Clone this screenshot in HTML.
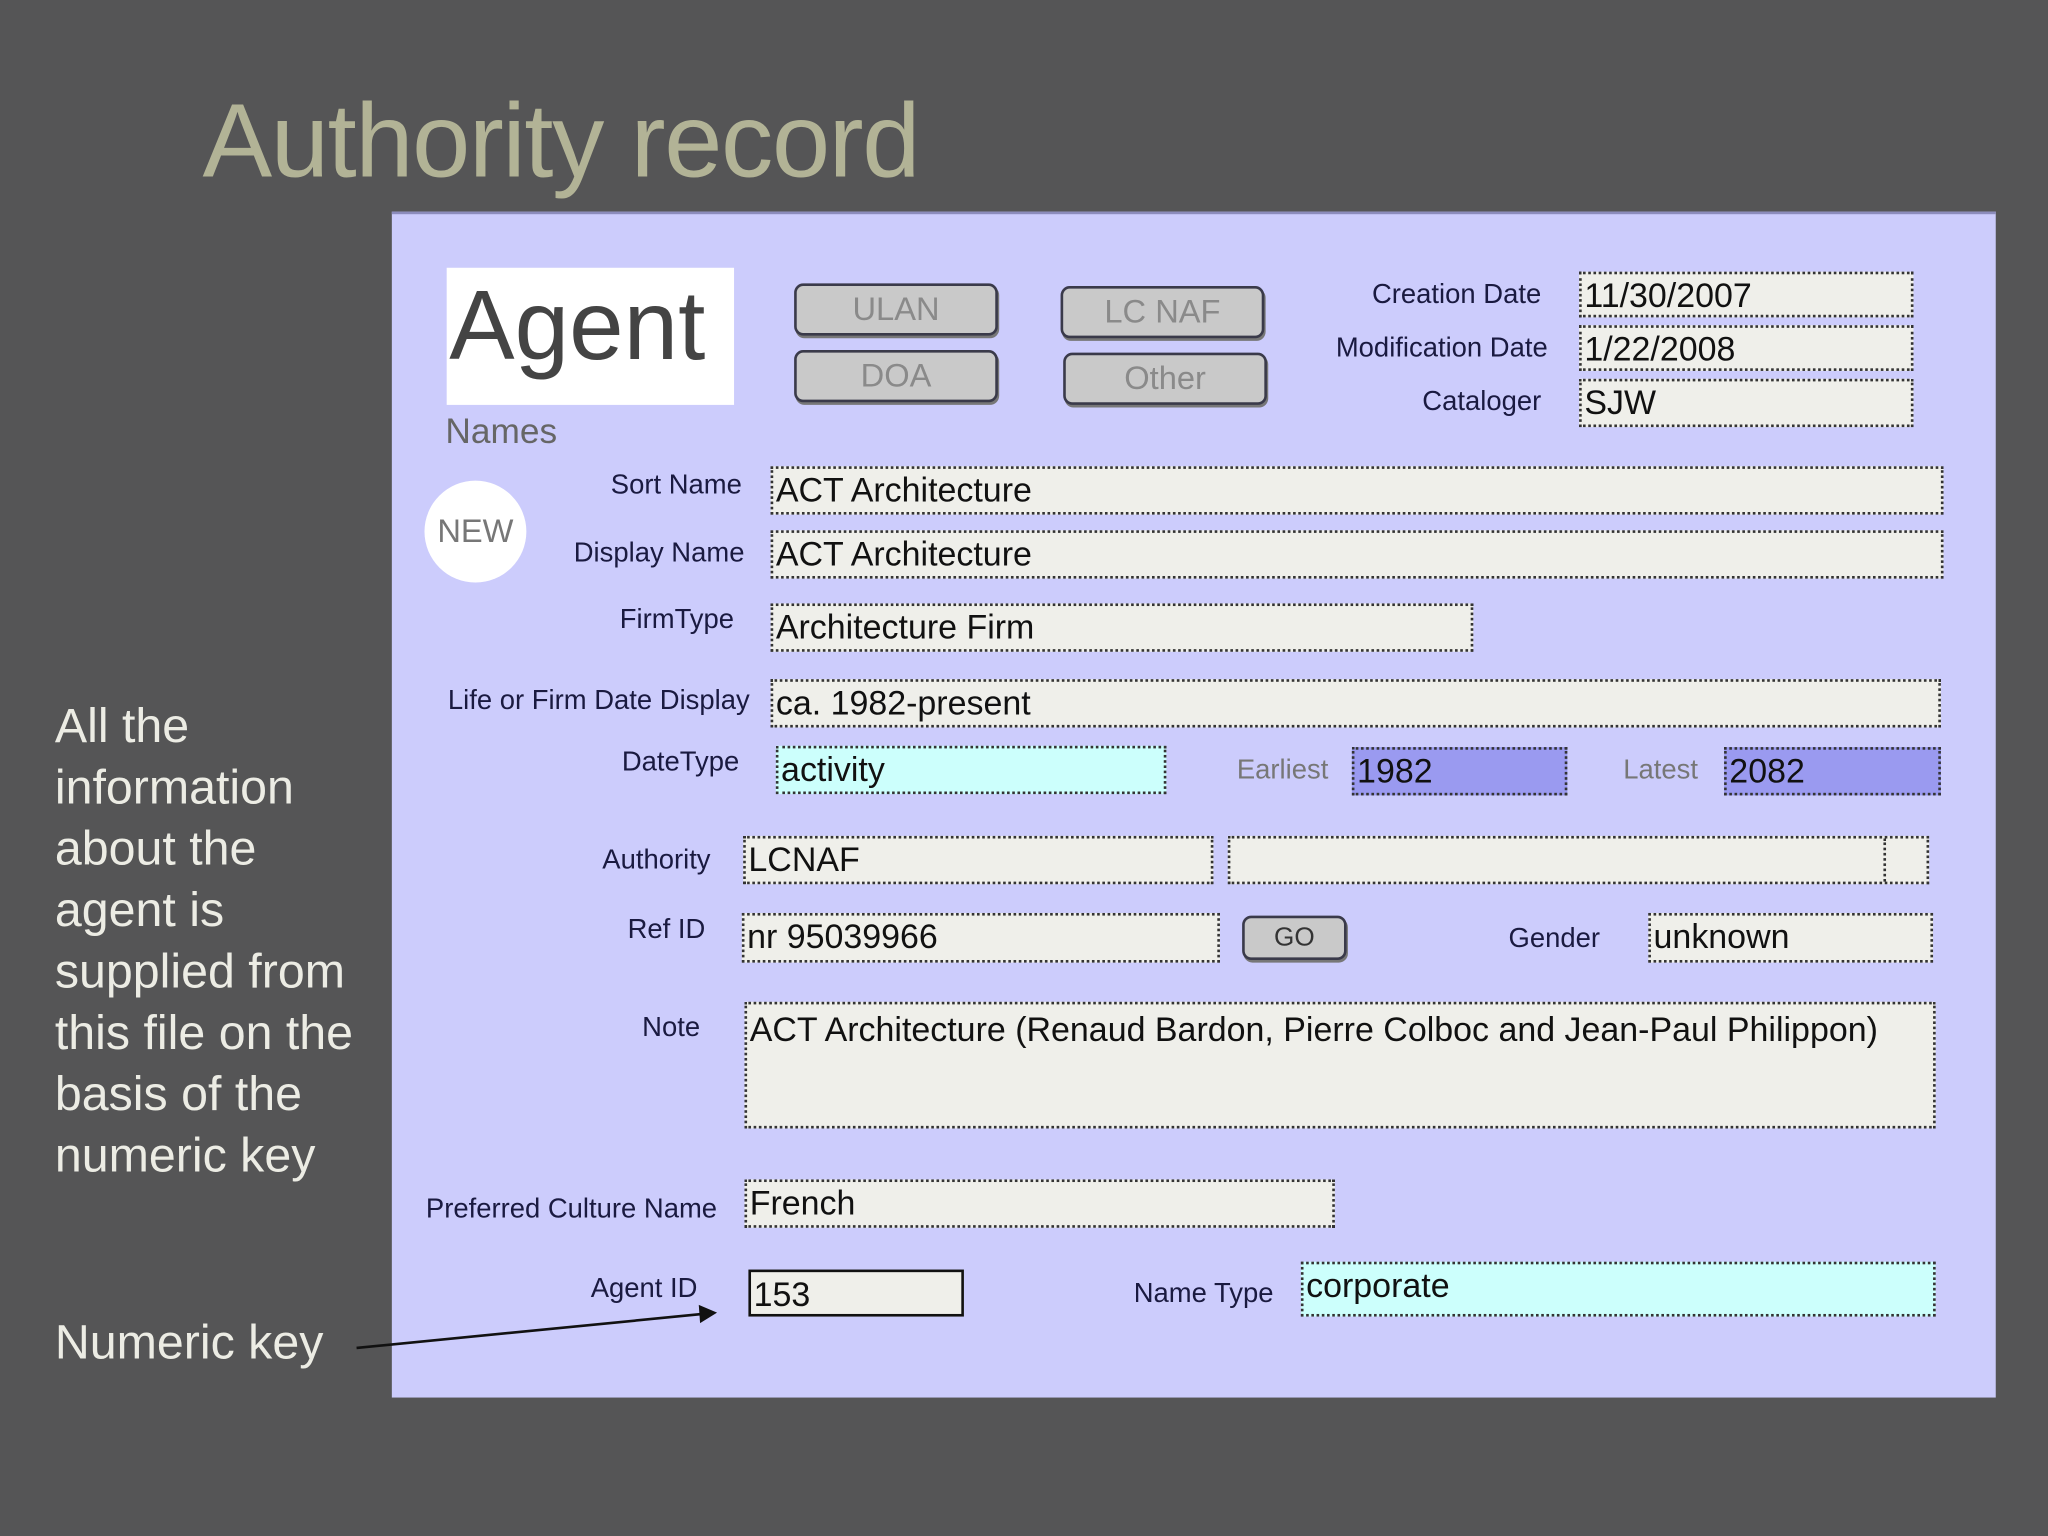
<!DOCTYPE html>
<html><head><meta charset="utf-8"><style>
html,body{margin:0;padding:0;background:#555556;width:2048px;height:1536px;overflow:hidden}
#w{position:absolute;left:0;top:0;width:1568px;height:1176px;transform:scale(1.30612);transform-origin:0 0;font-family:"Liberation Sans",sans-serif}
.a{position:absolute}
.title{left:155px;top:62px;font-size:80px;color:#b2b396;white-space:nowrap;letter-spacing:-1px}
.side{left:42px;top:532px;font-size:37px;line-height:47px;color:#ecece4;white-space:nowrap}
.panel{left:300px;top:162px;width:1228px;height:906px;background:#ccccfc;border-top:2px solid #8c8cbc}
.f{position:absolute;background:#efefea;border:2px dotted #333;box-sizing:border-box;font-family:"Liberation Sans Narrow","Liberation Sans",sans-serif;font-size:26px;color:#111;padding-left:2px;line-height:32px;white-space:nowrap;overflow:hidden}
.l{position:absolute;font-family:"Liberation Sans Narrow","Liberation Sans",sans-serif;font-size:21px;color:#1a1a40;text-align:right;white-space:nowrap;transform:translateX(-100%)}
.b{position:absolute;background:#c9c9c9;border:2px solid #3a3a4a;border-radius:7px;box-sizing:border-box;text-align:center;color:#8a8a8a;font-size:25px;font-family:"Liberation Sans Narrow","Liberation Sans",sans-serif;box-shadow:1px 2px 0 #777}
.cy{background:#ccfffc}.bl{background:#9a9af0}
</style></head><body><div id="w">
<div class="a title">Authority record</div>
<div class="a side">All the<br>information<br>about the<br>agent is<br>supplied from<br>this file on the<br>basis of the<br>numeric key</div>
<div class="a side" style="top:1004px">Numeric key</div>
<div class="a panel"></div>
<div class="a" style="left:342px;top:205px;width:220px;height:105px;background:#fff"></div>
<div class="a" style="left:344px;top:206px;font-size:75px;color:#444">Agent</div>
<div class="a" style="left:341px;top:315px;font-size:27px;color:#666">Names</div>
<div class="a" style="left:325px;top:368px;width:78px;height:78px;border-radius:50%;background:#fff;text-align:center;line-height:78px;font-size:25px;color:#777">NEW</div>
<div class="b" style="left:608px;top:217px;width:156px;height:40px;line-height:36px">ULAN</div>
<div class="b" style="left:608px;top:268px;width:156px;height:40px;line-height:36px">DOA</div>
<div class="b" style="left:812px;top:219px;width:156px;height:40px;line-height:36px">LC NAF</div>
<div class="b" style="left:814px;top:270px;width:156px;height:40px;line-height:36px">Other</div>
<div class="l" style="left:1180px;top:214px">Creation Date</div>
<div class="l" style="left:1185px;top:255px">Modification Date</div>
<div class="l" style="left:1180px;top:296px">Cataloger</div>
<div class="f" style="left:1209px;top:208px;width:256px;height:35px">11/30/2007</div>
<div class="f" style="left:1209px;top:249px;width:256px;height:35px">1/22/2008</div>
<div class="f" style="left:1209px;top:290px;width:256px;height:37px">SJW</div>
<div class="l" style="left:568px;top:360px">Sort Name</div>
<div class="f" style="left:590px;top:357px;width:898px;height:37px">ACT Architecture</div>
<div class="l" style="left:570px;top:412px">Display Name</div>
<div class="f" style="left:590px;top:406px;width:898px;height:37px">ACT Architecture</div>
<div class="l" style="left:562px;top:463px">FirmType</div>
<div class="f" style="left:590px;top:462px;width:538px;height:37px">Architecture Firm</div>
<div class="l" style="left:574px;top:525px">Life or Firm Date Display</div>
<div class="f" style="left:590px;top:520px;width:896px;height:37px">ca. 1982-present</div>
<div class="l" style="left:566px;top:572px">DateType</div>
<div class="f cy" style="left:594px;top:571px;width:299px;height:37px">activity</div>
<div class="l" style="left:1017px;top:578px;color:#777">Earliest</div>
<div class="f bl" style="left:1035px;top:572px;width:165px;height:37px">1982</div>
<div class="l" style="left:1300px;top:578px;color:#777">Latest</div>
<div class="f bl" style="left:1320px;top:572px;width:166px;height:37px">2082</div>
<div class="l" style="left:544px;top:647px">Authority</div>
<div class="f" style="left:569px;top:640px;width:360px;height:37px">LCNAF</div>
<div class="f" style="left:940px;top:640px;width:537px;height:37px"></div>
<div class="a" style="left:1442px;top:642px;width:0;height:33px;border-left:2px dotted #333"></div>
<div class="l" style="left:540px;top:700px">Ref ID</div>
<div class="f" style="left:568px;top:699px;width:366px;height:38px">nr 95039966</div>
<div class="b" style="left:951px;top:701px;width:80px;height:34px;line-height:30px;color:#333;font-size:20px">GO</div>
<div class="l" style="left:1225px;top:707px">Gender</div>
<div class="f" style="left:1262px;top:699px;width:218px;height:38px">unknown</div>
<div class="l" style="left:536px;top:775px">Note</div>
<div class="f" style="left:570px;top:767px;width:912px;height:97px;line-height:38px">ACT Architecture (Renaud Bardon, Pierre Colboc and Jean-Paul Philippon)</div>
<div class="l" style="left:549px;top:914px">Preferred Culture Name</div>
<div class="f" style="left:570px;top:903px;width:452px;height:37px">French</div>
<div class="l" style="left:534px;top:975px">Agent ID</div>
<div class="f" style="left:573px;top:972px;width:165px;height:36px;border:2px solid #111;line-height:34px">153</div>
<div class="l" style="left:975px;top:979px">Name Type</div>
<div class="f cy" style="left:996px;top:966px;width:486px;height:42px">corporate</div>
<svg class="a" style="left:0;top:0" width="1568" height="1176"><line x1="273" y1="1032" x2="538" y2="1006" stroke="#111" stroke-width="2"/><polygon points="549,1005 535,999 536,1013" fill="#111"/></svg>
</div></body></html>
